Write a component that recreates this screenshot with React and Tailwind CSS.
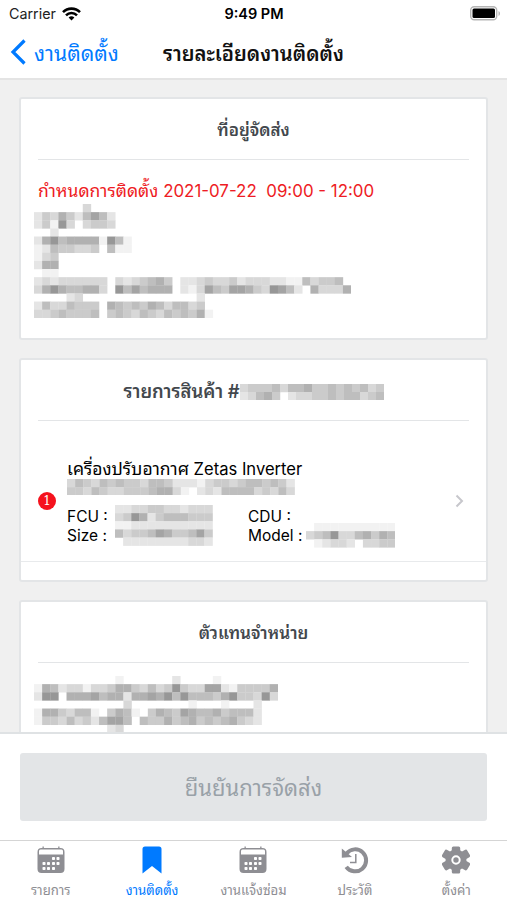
const CELL = 8.13;

// Masked text: every digit is one cell, 0 is empty and 9 the darkest
function Mosaic({ rows, className = '', cell = CELL }) {
  const cols = Math.max(...rows.map((r) => r.length));
  return (
    <svg
      className={`shrink-0 ${className}`}
      width={cols * cell}
      height={rows.length * cell}
      viewBox={`0 0 ${cols} ${rows.length}`}
      preserveAspectRatio="none"
    >
      {rows.map((row, y) =>
        [...row].map((c, x) => {
          const g = 255 - Number(c) * 13;
          return c === '0' ? null : (
            <rect key={`${x}-${y}`} x={x} y={y} width={1.03} height={1.03} fill={`rgb(${g},${g},${g})`} />
          );
        })
      )}
    </svg>
  );
}

const ADDRESS = [
  '0000003',
  '2436425752',
  '2418303443',
  '002',
  '268566661851',
  '125443340511',
  '134',
  '266',
  '011',
  '232333333032345640223433423332211534450',
  '368655663085756660213754776438752063336',
  '0000230000000000000020000',
  '253354440654546535534',
  '3345444504543543545461',
];

const DEALER = [
  '000000000010000002000010',
  '165233133466435348433772144446',
  '288066675662667685855546844383',
  '000000000003000000010001000200',
  '1664355104651046547655645552',
  '1443534257750544645645456432',
  '0000000002300',
];

function CalendarIcon() {
  return (
    <svg width="28" height="28" viewBox="0 0 28 28" fill="#8e8e93">
      <path d="M4.5 2h1v-1.500h1.300V2h14.400V.5h1.300V2h1a4 4 0 0 1 4 4v17a4 4 0 0 1-4 4h-19a4 4 0 0 1-4-4V6a4 4 0 0 1 4-4z" />
      <path fill="#fff" d="M3.500 3.500h21a1.500 1.500 0 0 1 1.500 1.500v3.500h-24V5a1.500 1.500 0 0 1 1.500-1.500z" />
      {[[15, 11], [19.5, 11], [5.5, 16], [10, 16], [15, 16], [19.5, 16], [5.5, 21], [10, 21], [15, 21]].map(([x, y]) => (
        <rect key={`${x}-${y}`} x={x} y={y} width="3" height="3" rx=".8" fill="#fff" />
      ))}
    </svg>
  );
}

function BookmarkIcon() {
  return (
    <svg width="20" height="28" viewBox="0 0 20 28" fill="#007aff">
      <path d="M3 .5h14a2.500 2.500 0 0 1 2.500 2.500v24.500L10 20 .5 27.500V3A2.500 2.500 0 0 1 3 .5z" />
    </svg>
  );
}

function HistoryIcon() {
  return (
    <svg width="28" height="28" viewBox="0 0 28 28" fill="none" stroke="#8e8e93">
      <path d="M5.500 7.500A11 11 0 1 1 5.200 20.800" strokeWidth="4" />
      <path d="M14.800 8v8.500H9" strokeWidth="1.500" />
      <path d="M.8 2.500v9.300l10.200-.8z" fill="#8e8e93" stroke="none" />
    </svg>
  );
}

function GearIcon() {
  return (
    <svg width="28" height="28" viewBox="0 0 28 28" fill="#8e8e93">
      <circle cx="14" cy="14" r="10.500" />
      <rect x="9.800" y=".5" width="8.400" height="27" rx="1.500" />
      <rect x="9.800" y="-.5" width="8.400" height="29" rx="1.500" transform="rotate(60 14 14)" />
      <rect x="9.800" y="-.5" width="8.400" height="29" rx="1.500" transform="rotate(120 14 14)" />
      <circle cx="14" cy="14" r="3.700" fill="none" stroke="#fff" strokeWidth="2" />
    </svg>
  );
}

const TABS = [
  { label: 'รายการ', icon: <CalendarIcon /> },
  { label: 'งานติดตั้ง', icon: <BookmarkIcon />, active: true },
  { label: 'งานแจ้งซ่อม', icon: <CalendarIcon /> },
  { label: 'ประวัติ', icon: <HistoryIcon /> },
  { label: 'ตั้งค่า', icon: <GearIcon /> },
];

function Card({ className = '', title, children }) {
  return (
    <section className={`mx-[19px] shrink-0 rounded-[3px] border-2 border-[#e3e5e7] bg-white ${className}`}>
      <h2 className="mx-[17px] flex h-[61px] items-center justify-center border-b border-[#e3e5e7] pt-[3px] text-[17px] font-semibold text-[#43484d]">
        {title}
      </h2>
      {children}
    </section>
  );
}

export default function App() {
  return (
    <div className="flex h-[900px] w-[507px] flex-col overflow-hidden bg-[#f0f0f0] font-['Inter','Thonburi','Noto_Sans_Thai_Looped','Loma','Umpush','Garuda','Waree',sans-serif]">
      <header className="h-[80px] shrink-0 border-b-2 border-[#e4e4e4] bg-white">
        <div className="grid h-[27px] grid-cols-3 items-center pr-[6px] pl-[9px] text-[14.500px]">
          <div className="flex items-center gap-1.5 text-[14.300px] text-[#222]">
            <span>Carrier</span>
            <svg width="19" height="14" viewBox="0 0 19 14" fill="none" stroke="#000" strokeWidth="2.600">
              <path d="M1 5.200a12 12 0 0 1 17 0M4 8.300a7.800 7.800 0 0 1 11 0" />
              <path d="M9.500 13.500L6.600 10.600a4.100 4.100 0 0 1 5.800 0z" fill="#000" stroke="none" />
            </svg>
          </div>
          <span className="-ml-[2px] text-center font-semibold">9:49 PM</span>
          <svg className="justify-self-end" width="31" height="15" viewBox="0 0 31 15">
            <rect x=".7" y=".7" width="26" height="13" rx="3.500" fill="#fff" stroke="#b5b5b5" strokeWidth="1.400" />
            <rect x="2.500" y="2.500" width="22.500" height="9.500" rx="1.500" />
            <path d="M28.500 5c2 .8 2 4 0 5z" fill="#b5b5b5" />
          </svg>
        </div>
        <div className="grid h-[51px] grid-cols-[150px_1fr_150px] items-center">
          <div className="flex items-center gap-[8px] pl-[10px] text-[#007aff]">
            <svg width="16" height="26" viewBox="0 0 16 26" fill="none" stroke="currentColor" strokeWidth="3.200">
              <path d="M14.500 1.500L3 13l11.500 11.500" />
            </svg>
            <span className="pt-[3px] text-[21.200px] whitespace-nowrap">งานติดตั้ง</span>
          </div>
          <h1 className="pt-[4px] text-center text-[20.200px] font-semibold whitespace-nowrap text-[#111]">รายละเอียดงานติดตั้ง</h1>
        </div>
      </header>

      <main className="flex h-[652px] shrink-0 flex-col overflow-hidden pt-[17px]">
        <Card className="h-[243px]" title="ที่อยู่จัดส่ง">
          <p className="mt-[19px] ml-[17px] h-[25px] text-[16.900px] leading-[24px] whitespace-pre text-[#ee1c24]">
            <span className="text-[17.500px]">กำหนดการติดตั้ง</span>
            {' 2021-07-22  09:00 - 12:00'}
          </p>
          <Mosaic className="ml-[13px]" rows={ADDRESS} />
        </Card>

        <Card
          className="mt-[18px] h-[224px]"
          title={
            <>
              <span className="text-[18.400px]">รายการสินค้า #</span>
              <Mosaic rows={['344453556445454534', '235640233445455345']} cell={8} />
            </>
          }
        >
          <div className="flex h-[141px] items-center border-b border-[#e8eaec] pt-[20px] pl-[17px]">
            <span className="flex size-[18px] items-center justify-center rounded-full bg-[#f5121d] font-['DejaVu_Serif',serif] text-[12px] text-white">1</span>
            <div className="ml-[11px] w-[388px] pt-[1px] text-[15.500px] leading-[19px]">
              <p className="h-[21px] text-[16.600px] leading-[22px] whitespace-nowrap">
                <span className="text-[17.500px]">เครื่องปรับอากาศ</span> Zetas Inverter
              </p>
              <Mosaic rows={['3543545443554222134434554542', '4435433444566310232555534353']} />
              <div className="mt-[10px] grid grid-cols-[45px_136px_56px_1fr] grid-rows-[19px_19px] pt-[2px] whitespace-nowrap">
                <span>FCU :</span>
                <Mosaic className="row-span-2 -mt-[2px] ml-[3px]" rows={['223344332333', '348624555444', '112222222222', '534457644574', '022222222332']} />
                <span>CDU :</span>
                <span />
                <span>Size :</span>
                <span>Model :</span>
                <Mosaic className="mt-[-3px] ml-[2px]" rows={['01111111111', '34583356465', '01233203344']} />
              </div>
            </div>
            <svg width="9" height="14" viewBox="0 0 9 14" fill="none" stroke="#c7c7cc" strokeWidth="2">
              <path d="M1.500 1.500L7 7l-5.500 5.500" />
            </svg>
          </div>
        </Card>

        <Card className="mt-[18px] h-[224px]" title="ตัวแทนจำหน่าย">
          <Mosaic className="mt-[13px] ml-[13px]" rows={DEALER} />
        </Card>
      </main>

      <footer className="h-[108px] shrink-0 border-t-2 border-[#dfe2e4] bg-white px-[20px] pt-[19px]">
        <button className="h-[68px] w-full rounded-[3px] bg-[#e3e5e7] pt-[3px] text-[22px] text-[#99a1a8]">ยืนยันการจัดส่ง</button>
      </footer>

      <nav className="grid h-[60px] shrink-0 grid-cols-5 border-t border-[#d5d5d5] bg-white">
        {TABS.map((tab) => (
          <a key={tab.label} className={`flex flex-col items-center gap-[6px] pt-[5px] ${tab.active ? 'text-[#007aff]' : 'text-[#8e8e93]'}`}>
            {tab.icon}
            <span className="text-[13.200px] leading-[20px] whitespace-nowrap">{tab.label}</span>
          </a>
        ))}
      </nav>
    </div>
  );
}
